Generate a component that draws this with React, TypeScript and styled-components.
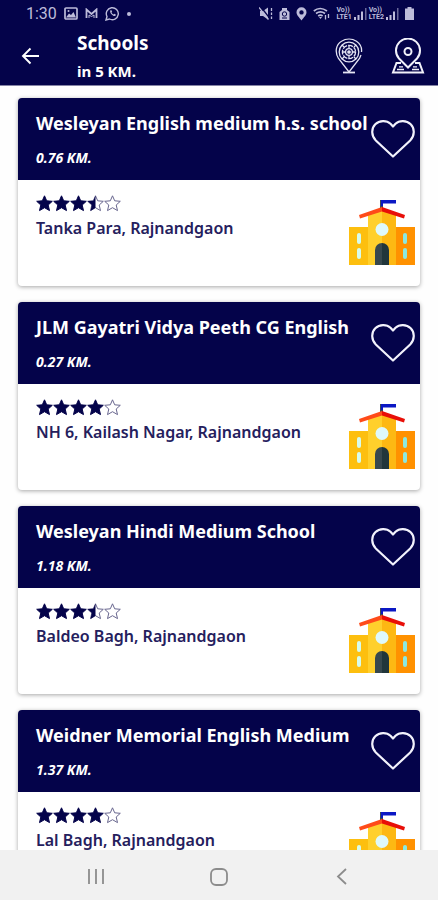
import React from "react";
import styled, { createGlobalStyle } from "styled-components";

const navy = "#04034a";

const GlobalStyle = createGlobalStyle`
  * { box-sizing: border-box; }
  body { margin: 0; background: #fefefe; font-family: "Noto Sans", "Open Sans", sans-serif; }
  h1, h2, p { margin: 0; }
  button { border: 0; padding: 0; background: none; color: inherit; font: inherit; cursor: pointer; }
  svg { display: block; flex: none; }
`;

const Screen = styled.div`
  display: flex;
  flex-direction: column;
  height: 100vh;
  overflow: hidden;
`;

const Top = styled.header`
  flex: none;
  background: ${navy};
  color: #fff;
  border-bottom: 1px solid #8584a5;
`;

const StatusBar = styled.div`
  display: flex;
  align-items: center;
  justify-content: space-between;
  height: 27px;
  padding: 0 24px 0 26px;
  color: #bdbcda;
`;

const StatusGroup = styled.div<{ $gap: number }>`
  display: flex;
  align-items: center;
  gap: ${(p) => p.$gap}px;
`;

const Clock = styled.span`
  font: 16px/20px Roboto, sans-serif;
`;

const Dot = styled.span`
  width: 4px;
  height: 4px;
  border-radius: 50%;
  background: currentColor;
`;

const Network = styled.span`
  display: flex;
  flex-direction: column;
  font: bold 7px/7px Roboto, sans-serif;
`;

const AppBar = styled.div`
  display: flex;
  align-items: center;
  height: 58px;
  padding: 0 13px 0 19px;
`;

const Heading = styled.div`
  flex: 1;
  padding-left: 34px;
`;

const PageTitle = styled.h1`
  font-size: 19px;
  line-height: 30px;
  font-weight: 700;
`;

const Subtitle = styled.p`
  font-size: 15px;
  line-height: 26px;
  font-weight: 700;
`;

const Actions = styled.div`
  display: flex;
  gap: 28px;
`;

const List = styled.main`
  flex: 1;
  min-height: 0;
  overflow: hidden;
  display: flex;
  flex-direction: column;
  gap: 16px;
  padding: 12px 18px 0;
`;

const Card = styled.article`
  flex: none;
  border-radius: 4px;
  background: #fff;
  box-shadow: 0 1px 4px rgba(0, 0, 0, 0.35);
  overflow: hidden;
`;

const CardHead = styled.div`
  display: flex;
  align-items: center;
  justify-content: space-between;
  height: 82px;
  padding: 0 5px 0 18px;
  background: ${navy};
  color: #fff;
`;

const CardName = styled.h2`
  font-size: 18px;
  line-height: 30px;
  font-weight: 700;
  white-space: nowrap;
`;

const Distance = styled.p`
  padding-top: 8px;
  font-size: 14px;
  line-height: 24px;
  font-weight: 700;
  font-style: italic;
`;

const Names = styled.div`
  min-width: 0;
`;

const CardBody = styled.div`
  display: flex;
  justify-content: space-between;
  height: 106px;
  padding: 15px 5px 0 18px;
`;

const SchoolPicture = styled.div`
  padding-top: 4px;
`;

const Stars = styled.div`
  display: flex;
  height: 18px;
`;

const Address = styled.p`
  padding-top: 2px;
  font-size: 16px;
  line-height: 26px;
  font-weight: 600;
  color: #25205d;
`;

const NavBar = styled.nav`
  flex: none;
  display: grid;
  grid-template-columns: repeat(3, 1fr);
  height: 50px;
  padding: 3px 35px 0;
  background: #f1f1f1;
  color: #8c8c8c;
`;

const NavButton = styled.button`
  display: grid;
  place-items: center;
`;

const starPath = "M8.500 0.800 L10.700 5.800 L16.300 6.300 L12.200 10 L13.500 15.600 L8.500 12.700 L3.500 15.600 L4.800 10 L0.700 6.300 L6.300 5.800 Z";
const halfPath = "M8.500 0.500 V12.700 L3.500 15.900 L4.800 10 L0.500 6 L6.300 5.800 Z";

function Star({ fill }: { fill: number }) {
  return (
    <svg width="17" height="17" viewBox="0 0 17 17">
      <path d={starPath} fill={fill === 1 ? navy : "#fff"} stroke={fill === 1 ? navy : "#68668e"} strokeWidth="1" />
      {fill === 0.5 && <path d={halfPath} fill={navy} />}
    </svg>
  );
}

function Rating({ value }: { value: number }) {
  return (
    <Stars role="img" aria-label={`${value} / 5`}>
      {[0, 1, 2, 3, 4].map((i) => (
        <Star key={i} fill={Math.max(0, Math.min(1, value - i))} />
      ))}
    </Stars>
  );
}

function Heart() {
  return (
    <svg width="44" height="40" viewBox="0 0 44 40" fill="none" stroke="#f2f2fc" strokeWidth="2.200" strokeLinejoin="round">
      <path d="M22 37.500 L4.800 21.500 C0.300 17 0 9.500 4.300 5.300 C8.500 1.200 15.500 1 19.500 4.800 L22 7.500 L24.500 4.800 C28.500 1 35.500 1.200 39.700 5.300 C44 9.500 43.700 17 39.200 21.500 Z" />
    </svg>
  );
}

function SchoolBuilding() {
  return (
    <svg width="66" height="67" viewBox="0 0 66 67">
      <path d="M0 28h20v38H0z" fill="#fdbf0f" />
      <path d="M46 28h20v38H46z" fill="#ff9100" />
      <path d="M19 16 L33 9.500 V66 H19z" fill="#ffd02c" />
      <path d="M33 9.500 L47 16 V66 H33z" fill="#fdb813" />
      <path d="M31 1h3v10h-3z" fill="#3b4a58" />
      <path d="M32 1h15v3.600H34V7h-2z" fill="#0b18c4" />
      <path d="M10 16 L33 8 V12.500 L11 19.500z" fill="#ff4b19" />
      <path d="M33 8 L56 16 L55 19.500 L33 12.500z" fill="#e80f08" />
      <circle cx="33" cy="30.500" r="6.500" fill="#def9fb" />
      <path d="M26 66V51a7 7 0 0 1 7-7v22z" fill="#37484e" />
      <path d="M33 44a7 7 0 0 1 7 7v15h-7z" fill="#21363b" />
      <g fill="#d6fcec">
        <rect x="8" y="34" width="4" height="11" rx="2" />
        <rect x="8" y="49" width="4" height="11" rx="2" />
      </g>
      <g fill="#8ce9df">
        <rect x="54" y="34" width="4" height="11" rx="2" />
        <rect x="54" y="49" width="4" height="11" rx="2" />
      </g>
    </svg>
  );
}

function BackArrow() {
  return (
    <svg width="24" height="24" viewBox="0 0 24 24" fill="none" stroke="#fff" strokeWidth="1.900">
      <path d="M20 12H4M11.500 4.500 4 12l7.500 7.500" />
    </svg>
  );
}

function TargetPin() {
  return (
    <svg width="28" height="36" viewBox="0 0 28 36" fill="none" stroke="#e4e4f3" strokeWidth="1.300">
      <path d="M14 34 L3.500 20.500 C-0.500 14 1 6.500 6.500 3.200 C11 0.300 17 0.300 21.500 3.200 C25.500 6 27 10 26.500 14" />
      <path d="M14 34 L24.500 20.500 L26 17" />
      <circle cx="14" cy="14" r="9.800" />
      <circle cx="14" cy="14" r="6.600" strokeDasharray="5 1" />
      <circle cx="14" cy="14" r="3.400" />
      <circle cx="14" cy="14" r="1.200" fill="#e4e4f3" />
      <path d="M14 7.500v3M14 17.500v3M7.500 14h3M17.500 14h3M7 7l2 2M19 19l2 2M21 7l-2 2M9 19l-2 2" />
      <path d="M8 34.500h12" strokeWidth="1.800" />
    </svg>
  );
}

function MapPin() {
  return (
    <svg width="34" height="36" viewBox="0 0 34 36" fill="none" stroke="#f1f1fa" strokeWidth="2">
      <path d="M17 29.500 L8 20.500 A12 12 0 1 1 26 20.500 Z" />
      <circle cx="17" cy="13.500" r="3.500" />
      <path d="M10 25H5.500L2 34.500h30L28.500 25H24" />
      <path d="M8 28.800h4M22 28.800h4M6 31.500h7M21 31.500h7" strokeWidth="1.300" />
    </svg>
  );
}

function PictureIcon() {
  return (
    <svg width="14" height="13" viewBox="0 0 14 13" fill="none" stroke="currentColor" strokeWidth="1.700">
      <rect x="1" y="1" width="12" height="11" rx="1" />
      <path d="m2 10.500 3-4 2 1.500L9.500 5l2.500 5.500z" fill="currentColor" stroke="none" />
      <circle cx="4.500" cy="4" r="1" fill="currentColor" stroke="none" />
    </svg>
  );
}

function MailIcon() {
  return (
    <svg width="13" height="11" viewBox="0 0 13 11" fill="none" stroke="currentColor">
      <path d="M1.500 10V1.500L6.500 6l5-4.500V10" strokeWidth="1.800" />
      <path d="M4 10V7l2.500 1.500L9 7v3" />
    </svg>
  );
}

function ChatIcon() {
  return (
    <svg width="15" height="15" viewBox="0 0 15 15" fill="none" stroke="currentColor" strokeWidth="1.400">
      <path d="M1 14l1-3.500A6 6 0 1 1 4.500 13z" />
      <path d="M5.500 4.200c-1 1 0 3 1.200 4.200s3 2.200 4 1.200l.3-.8-1.700-1-.9.700c-1-.4-1.600-1.100-1.900-1.900l.6-.8-.8-1.700z" fill="currentColor" stroke="none" />
    </svg>
  );
}

function MuteIcon() {
  return (
    <svg width="14" height="13" viewBox="0 0 14 13" fill="none" stroke="currentColor" strokeWidth="1.300">
      <path d="M1 4h3L9 .5v12L4 9H1z" fill="currentColor" stroke="none" />
      <path d="M2 0l8.500 11" stroke={navy} />
      <path d="M0 .5l9.500 12M12.500 1v3M12.500 5.500v2.500M12.500 9.500V12" />
    </svg>
  );
}

function AlarmIcon() {
  return (
    <svg width="11" height="14" viewBox="0 0 11 14">
      <path d="M.5 5 3 3V1h5v2l2.500 2v8H.5z" fill="currentColor" />
      <circle cx="5.500" cy="7" r="2.200" fill="none" stroke={navy} />
      <path d="M3 11h5" stroke={navy} />
    </svg>
  );
}

function PlaceIcon() {
  return (
    <svg width="11" height="14" viewBox="0 0 11 14">
      <path fillRule="evenodd" d="M5.500 13.500C3 10 .5 8 .5 5.200a5 5 0 0 1 10 0c0 2.800-2.500 4.800-5 8.300zM5.500 3.200a2.200 2.200 0 1 0 0 4.400 2.200 2.200 0 0 0 0-4.400z" fill="currentColor" />
    </svg>
  );
}

function WifiIcon() {
  return (
    <svg width="17" height="13" viewBox="0 0 17 13" fill="none" stroke="currentColor" strokeWidth="1.700">
      <path d="M.8 4Q7 -1 14 4M3 6.500q4.500-3.200 9 0M5.200 9q2.200-1.700 4.400 0" />
      <path d="M6 10h3l-1.500 2z" fill="currentColor" stroke="none" />
      <path d="M12.500 8v4.500M15.500 7v4" strokeWidth="1.300" />
    </svg>
  );
}

function SignalIcon() {
  return (
    <svg width="13" height="12" viewBox="0 0 13 12" fill="currentColor">
      <path d="M0 9h2v3H0zM3.500 7h2v5h-2zM7 3.500h2V12H7z" />
      <path d="M11 0h1.500v12H11z" opacity="0.550" />
    </svg>
  );
}

function BatteryIcon() {
  return (
    <svg width="9" height="13" viewBox="0 0 9 13" fill="currentColor">
      <path d="M2.500 0h4v1.500H9V13H0V1.500h2.500z" />
    </svg>
  );
}

const schools = [
  { name: "Wesleyan English medium h.s. school", distance: "0.76 KM.", rating: 3.5, address: "Tanka Para, Rajnandgaon" },
  { name: "JLM Gayatri Vidya Peeth CG English", distance: "0.27 KM.", rating: 4, address: "NH 6, Kailash Nagar, Rajnandgaon" },
  { name: "Wesleyan Hindi Medium School", distance: "1.18 KM.", rating: 3.5, address: "Baldeo Bagh, Rajnandgaon" },
  { name: "Weidner Memorial English Medium", distance: "1.37 KM.", rating: 4, address: "Lal Bagh, Rajnandgaon" },
];

export default function App() {
  return (
    <>
      <GlobalStyle />
      <Screen>
        <Top>
          <StatusBar>
            <StatusGroup $gap={7}>
              <Clock>1:30</Clock>
              <PictureIcon />
              <MailIcon />
              <ChatIcon />
              <Dot />
            </StatusGroup>
            <StatusGroup $gap={6}>
              <MuteIcon />
              <AlarmIcon />
              <PlaceIcon />
              <WifiIcon />
              <StatusGroup $gap={2}>
                <Network><span>Vo))</span><span>LTE1</span></Network>
                <SignalIcon />
                <Network><span>Vo))</span><span>LTE2</span></Network>
                <SignalIcon />
              </StatusGroup>
              <BatteryIcon />
            </StatusGroup>
          </StatusBar>
          <AppBar>
            <button aria-label="Back"><BackArrow /></button>
            <Heading>
              <PageTitle>Schools</PageTitle>
              <Subtitle>in 5 KM.</Subtitle>
            </Heading>
            <Actions>
              <button aria-label="Search radius"><TargetPin /></button>
              <button aria-label="Map"><MapPin /></button>
            </Actions>
          </AppBar>
        </Top>
        <List>
          {schools.map((s) => (
            <Card key={s.name}>
              <CardHead>
                <Names>
                  <CardName>{s.name}</CardName>
                  <Distance>{s.distance}</Distance>
                </Names>
                <button aria-label={`Favourite ${s.name}`}><Heart /></button>
              </CardHead>
              <CardBody>
                <div>
                  <Rating value={s.rating} />
                  <Address>{s.address}</Address>
                </div>
                <SchoolPicture><SchoolBuilding /></SchoolPicture>
              </CardBody>
            </Card>
          ))}
        </List>
        <NavBar>
          <NavButton aria-label="Recent apps">
            <svg width="18" height="17" viewBox="0 0 18 17" stroke="currentColor" strokeWidth="1.800">
              <path d="M2 1v15M9 1v15M16 1v15" />
            </svg>
          </NavButton>
          <NavButton aria-label="Home">
            <svg width="18" height="18" viewBox="0 0 18 18" fill="none" stroke="currentColor" strokeWidth="1.800">
              <rect x="1" y="1" width="16" height="16" rx="5" />
            </svg>
          </NavButton>
          <NavButton aria-label="Back">
            <svg width="12" height="17" viewBox="0 0 12 17" fill="none" stroke="currentColor" strokeWidth="1.800">
              <path d="M10 1 2 8.500l8 7.500" />
            </svg>
          </NavButton>
        </NavBar>
      </Screen>
    </>
  );
}
